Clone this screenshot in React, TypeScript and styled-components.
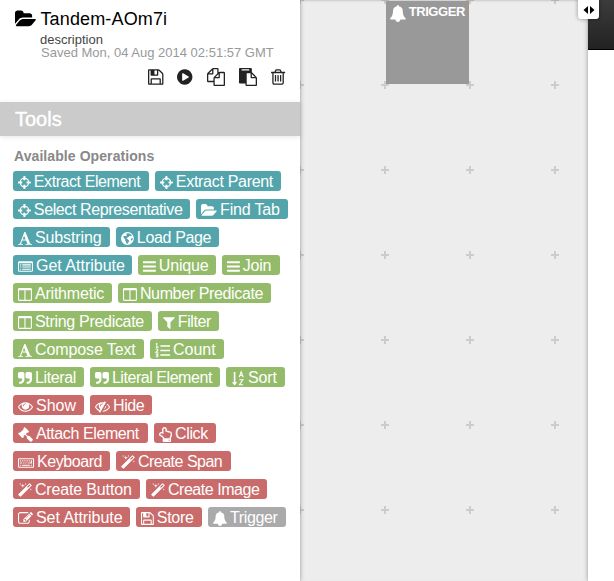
import React from 'react';
import styled, { createGlobalStyle } from 'styled-components';
import { FaRegHandPointUp } from 'react-icons/fa';

const Global = createGlobalStyle`
  * { box-sizing: border-box; }
  body { margin: 0; background: #fff; font-family: "Liberation Sans", Arial, sans-serif; overflow: hidden; }
`;

const paths = {
  folder: 'M1879 952q0 31-31 66l-336 396q-43 51-120.5 86.5t-143.5 35.5h-1088q-34 0-60.5-13t-26.5-43q0-31 31-66l336-396q43-51 120.5-86.5t143.5-35.5h1088q34 0 60.5 13t26.5 43zm-343-344v160h-832q-94 0-197 47.5t-164 119.5l-337 396-5 6q0-4-.5-12.5t-.5-12.5v-960q0-92 66-158t158-66h320q92 0 158 66t66 158v32h544q92 0 158 66t66 158z',
  save: 'M384 1536h768v-384h-768v384zm896 0h128v-896q0-14-10-38.5t-20-34.5l-281-281q-10-10-34-20t-39-10v416q0 40-28 68t-68 28h-576q-40 0-68-28t-28-68v-416h-128v1280h128v-416q0-40 28-68t68-28h832q40 0 68 28t28 68v416zm-384-928v-320q0-13-9.5-22.5t-22.5-9.5h-192q-13 0-22.5 9.5t-9.5 22.5v320q0 13 9.5 22.5t22.5 9.5h192q13 0 22.5-9.5t9.5-22.5zm640 32v928q0 40-28 68t-68 28h-1344q-40 0-68-28t-28-68v-1344q0-40 28-68t68-28h928q40 0 88 20t76 48l280 280q28 28 48 76t20 88z',
  play: 'M896 128q209 0 385.5 103t279.5 279.5 103 385.5-103 385.5-279.5 279.5-385.5 103-385.5-103-279.5-279.5-103-385.5 103-385.5 279.5-279.5 385.5-103zm384 823q32-18 32-55t-32-55l-544-320q-31-19-64-1-32 19-32 56v640q0 37 32 56 16 8 32 8 17 0 32-9z',
  files: 'M1696 384q40 0 68 28t28 68v1216q0 40-28 68t-68 28h-960q-40 0-68-28t-28-68v-288h-544q-40 0-68-28t-28-68v-672q0-40 20-88t48-76l408-408q28-28 76-48t88-20h416q40 0 68 28t28 68v328q68-40 128-40h416zm-544 213l-299 299h299v-299zm-640-384l-299 299h299v-299zm196 647l316-316v-416h-384v416q0 40-28 68t-68 28h-416v640h512v-256q0-40 20-88t48-76zm956 804v-1152h-384v416q0 40-28 68t-68 28h-416v640h896z',
  paste: 'M768 1664h896v-640h-416q-40 0-68-28t-28-68v-416h-384v1152zm256-1440v-64q0-13-9.5-22.5t-22.5-9.5h-704q-13 0-22.5 9.5t-9.5 22.5v64q0 13 9.5 22.5t22.5 9.5h704q13 0 22.5-9.5t9.5-22.5zm256 672h299l-299-299v299zm512 128v672q0 40-28 68t-68 28h-960q-40 0-68-28t-28-68v-160h-544q-40 0-68-28t-28-68v-1344q0-40 28-68t68-28h1088q40 0 68 28t28 68v328q21 13 36 28l408 408q28 28 48 76t20 88z',
  trash: 'M704 736v576q0 14-9 23t-23 9h-64q-14 0-23-9t-9-23v-576q0-14 9-23t23-9h64q14 0 23 9t9 23zm256 0v576q0 14-9 23t-23 9h-64q-14 0-23-9t-9-23v-576q0-14 9-23t23-9h64q14 0 23 9t9 23zm256 0v576q0 14-9 23t-23 9h-64q-14 0-23-9t-9-23v-576q0-14 9-23t23-9h64q14 0 23 9t9 23zm128 724v-948h-896v948q0 22 7 40.5t14.5 27 10.5 8.5h832q3 0 10.5-8.5t14.5-27 7-40.5zm-672-1076h448l-48-117q-7-9-17-11h-317q-10 2-17 11zm928 32v64q0 14-9 23t-23 9h-96v948q0 83-47 143.5t-113 60.5h-832q-66 0-113-58.5t-47-141.5v-952h-96q-14 0-23-9t-9-23v-64q0-14 9-23t23-9h309l70-167q15-37 54-63t79-26h320q40 0 79 26t54 63l70 167h309q14 0 23 9t9 23z',
  crosshairs: 'M1325 1024h-109q-26 0-45-19t-19-45v-128q0-26 19-45t45-19h109q-32-108-112.5-188.5t-188.5-112.5v109q0 26-19 45t-45 19h-128q-26 0-45-19t-19-45v-109q-108 32-188.5 112.5t-112.5 188.5h109q26 0 45 19t19 45v128q0 26-19 45t-45 19h-109q32 108 112.5 188.5t188.5 112.5v-109q0-26 19-45t45-19h128q26 0 45 19t19 45v109q108-32 188.5-112.5t112.5-188.5zm339-192v128q0 26-19 45t-45 19h-143q-37 161-154.5 278.5t-278.5 154.5v143q0 26-19 45t-45 19h-128q-26 0-45-19t-19-45v-143q-161-37-278.5-154.5t-154.5-278.5h-143q-26 0-45-19t-19-45v-128q0-26 19-45t45-19h143q37-161 154.5-278.5t278.5-154.5v-143q0-26 19-45t45-19h128q26 0 45 19t19 45v143q161 37 278.5 154.5t154.5 278.5h143q26 0 45 19t19 45z',
  serifA: 'M789 559l-170 450q33 0 136.5 2t160.5 2q19 0 57-2-87-253-184-452zm-725 1105l2-79q23-7 56-12.5t57-10.5 49.5-14.5 44.5-29 31-50.5l237-616 280-724h128q8 14 11 21l205 480q33 78 106 257.5t114 274.5q15 34 58 144.5t72 168.5q20 45 35 57 19 15 88 29.5t84 20.5q6 38 6 57 0 4-.5 13t-.5 13q-63 0-190-8t-191-8q-76 0-215 7t-178 8q0-43 4-78l131-28q1 0 12.5-2.5t15.5-3.5 14.5-4.5 15-6.5 11-8 9-11 2.5-14q0-16-31-96.5t-72-177.5-42-100l-450-2q-26 58-76.5 195.5t-50.5 162.5q0 22 14 37.5t43.5 24.5 48.5 13.5 57 8.5 41 4q1 19 1 58 0 9-2 27-58 0-174.5-10t-174.5-10q-8 0-26.5 4t-21.5 4q-80 14-188 14z',
  globe: 'M896 128a768 768 0 1 0 0 1536a768 768 0 1 0 0-1536zM1010 260L1240 350L1420 520L1330 640L1180 560L1060 700L900 780L780 900L900 960L1010 1090L1130 1180L1000 1370L920 1530L760 1500L740 1280L600 1120L640 960L480 860L390 700L500 560L700 640L830 500L760 390L880 280zM1360 880L1530 830L1500 1060L1380 1180L1290 1010z',
  listAlt: 'M160 256h1472q160 0 160 160v960q0 160-160 160h-1472q-160 0-160-160v-960q0-160 160-160zM128 512v864q0 32 32 32h1472q32 0 32-32v-864zM256 640h128v128h-128zM512 640h1024v128h-1024zM256 896h128v128h-128zM512 896h1024v128h-1024zM256 1152h128v128h-128zM512 1152h1024v128h-1024z',
  bars: 'M1664 1344v128q0 26-19 45t-45 19h-1408q-26 0-45-19t-19-45v-128q0-26 19-45t45-19h1408q26 0 45 19t19 45zm0-512v128q0 26-19 45t-45 19h-1408q-26 0-45-19t-19-45v-128q0-26 19-45t45-19h1408q26 0 45 19t19 45zm0-512v128q0 26-19 45t-45 19h-1408q-26 0-45-19t-19-45v-128q0-26 19-45t45-19h1408q26 0 45 19t19 45z',
  columns: 'M160 128h1344q160 0 160 160v1216q0 160-160 160h-1344q-160 0-160-160v-1216q0-160 160-160zM128 384v1120q0 32 32 32h608v-1152zM896 384v1152h608q32 0 32-32v-1120z',
  filter: 'M1595 295q17 41-14 70l-493 493v742q0 42-39 59-13 5-25 5-27 0-45-19l-256-256q-19-19-19-45v-486l-493-493q-31-29-14-70 17-39 59-39h1280q42 0 59 39z',
  quote: 'M832 320v704q0 104-40.5 198.5t-109.5 163.5-163.5 109.5-198.5 40.5h-64q-26 0-45-19t-19-45v-128q0-26 19-45t45-19h64q106 0 181-75t75-181v-32q0-40-28-68t-68-28h-224q-80 0-136-56t-56-136v-384q0-80 56-136t136-56h384q80 0 136 56t56 136zm896 0v704q0 104-40.5 198.5t-109.5 163.5-163.5 109.5-198.5 40.5h-64q-26 0-45-19t-19-45v-128q0-26 19-45t45-19h64q106 0 181-75t75-181v-32q0-40-28-68t-68-28h-224q-80 0-136-56t-56-136v-384q0-80 56-136t136-56h384q80 0 136 56t56 136z',
  eye: 'M1664 960q-152-236-381-353 61 104 61 225 0 185-131.5 316.5t-316.5 131.5-316.5-131.5-131.5-316.5q0-121 61-225-229 117-381 353 133 205 333.5 326.5t434.5 121.5 434.5-121.5 333.5-326.5zm-720-384q0-20-14-34t-34-14q-125 0-214.5 89.5t-89.5 214.5q0 20 14 34t34 14 34-14 14-34q0-86 61-147t147-61q20 0 34-14t14-34zm848 384q0 34-20 69-140 230-376.5 368.5t-499.5 138.5-499.5-139-376.5-368q-20-35-20-69t20-69q140-229 376.5-368t499.5-139 499.5 139 376.5 368q20 35 20 69z',
  eyeSlash: 'M555 1335l78-141q-87-63-136-159t-49-203q0-121 61-225-229 117-381 353 167 258 427 375zm389-759q0-20-14-34t-34-14q-125 0-214.5 89.5t-89.5 214.5q0 20 14 34t34 14 34-14 14-34q0-86 61-147t147-61q20 0 34-14t14-34zm363-191q0 7-1 9-105 188-315 566t-316 567l-49 89q-10 16-28 16-12 0-134-70-16-10-16-28 0-12 44-87-143-65-263.5-173t-208.5-245q-20-31-20-69t20-69q153-235 380-371t496-136q89 0 180 17l54-97q10-16 28-16 5 0 18 6t31 15.5 33 18.5 31.5 18.5 19.5 11.5q16 10 16 27zm37 447q0 139-79 253.5t-209 164.5l280-502q8 45 8 84zm448 128q0 35-20 69-39 64-109 145-150 172-347.5 267t-419.5 95l74-132q212-18 392.5-137t301.5-307q-115-179-282-294l63-112q95 64 182.5 153t144.5 184q20 34 20 69z',
  gavel: 'M1771 1536q0 53-37 90l-107 108q-39 37-91 37-53 0-90-37l-363-364q-38-36-38-90 0-53 43-96l-256-256-126 126q-14 14-34 14t-34-14q2 2 12.5 12t12.5 13 10 11.5 10 13.5 6 13.5 5.5 16.5 1.5 18q0 38-28 68-3 3-16.5 18t-19 20.5-18.5 16.5-22 15.5-22 9-26 4.5q-40 0-68-28l-408-408q-28-28-28-68 0-13 4.5-26t9-22 15.5-22 16.5-18.5 20.5-19 18-16.5q30-28 68-28 10 0 18 1.5t16.5 5.5 13.5 6 13.5 10 11.5 10 13 12.5 12 12.5q-14-14-14-34t14-34l348-348q14-14 34-14t34 14q-2-2-12.5-12t-12.5-13-10-11.5-10-13.5-6-13.5-5.5-16.5-1.5-18q0-38 28-68 3-3 16.5-18t19-20.5 18.5-16.5 22-15.5 22-9 26-4.5q40 0 68 28l408 408q28 28 28 68 0 13-4.5 26t-9 22-15.5 22-16.5 18.5-20.5 19-18 16.5q-30 28-68 28-10 0-18-1.5t-16.5-5.5-13.5-6-13.5-10-11.5-10-13-12.5-12-12.5q14 14 14 34t-14 34l-126 126 256 256q43-43 96-43 52 0 91 37l363 363q37 39 37 91z',
  keyboard: 'M128 384h1664q128 0 128 128v896q0 128-128 128h-1664q-128 0-128-128v-896q0-128 128-128zM128 512v896h1664v-896zM256 640h128v128h-128zM512 640h128v128h-128zM768 640h128v128h-128zM1024 640h128v128h-128zM1280 640h128v128h-128zM1536 640h128v384h-320v-128h192zM256 896h256v128h-256zM640 896h128v128h-128zM896 896h128v128h-128zM1152 896h128v128h-128zM256 1152h128v128h-128zM512 1152h896v128h-896zM1536 1152h128v128h-128z',
  magic: 'M1254 581l293-293-107-107-293 293zm447-293q0 27-18 45l-1286 1286q-18 18-45 18t-45-18l-198-198q-18-18-18-45t18-45l1286-1286q18-18 45-18t45 18l198 198q18 18 18 45zm-1351-190l98 30-98 30-30 98-30-98-98-30 98-30 30-98zm350 162l196 60-196 60-60 196-60-196-196-60 196-60 60-196zm930 478l98 30-98 30-30 98-30-98-98-30 98-30 30-98zm-640-640l98 30-98 30-30 98-30-98-98-30 98-30 30-98z',
  edit: 'M888 1184l116-116-152-152-116 116v56h96v96h56zm440-720q-16-16-33 1l-350 350q-17 17-1 33t33-1l350-350q17-17 1-33zm80 594v190q0 119-84.5 203.5t-203.5 84.5h-832q-119 0-203.5-84.5t-84.5-203.5v-832q0-119 84.5-203.5t203.5-84.5h832q63 0 117 25 15 7 18 23 3 17-9 29l-49 49q-14 14-32 8-23-6-45-6h-832q-66 0-113 47t-47 113v832q0 66 47 113t113 47h832q66 0 113-47t47-113v-126q0-13 9-22l64-64q15-15 35-7t20 29zm-96-738l288 288-672 672h-288v-288zm444 132l-92 92-288-288 92-92q28-28 68-28t68 28l152 152q28 28 28 68t-28 68z',
  bell: 'M1728 1408q0 52-38 90t-90 38h-448q0 106-75 181t-181 75-181-75-75-181h-448q-52 0-90-38t-38-90q50-42 91-88t85-119.5 74.5-158.5 50-206 19.5-260q0-152 117-282.5t307-158.5q-8-19-8-39 0-40 28-68t68-28 68 28 28 68q0 20-8 39 190 28 307 158.5t117 282.5q0 139 19.5 260t50 206 74.5 158.5 85 119.5 91 88z',
};

type IconName = keyof typeof paths | 'hand' | 'listOl' | 'sort';

/* Left bound and advance width of each icon on the 1792-unit em. */
const boxes: Record<IconName, [number, number]> = {
  folder: [0, 1920], save: [0, 1536], play: [128, 1536], files: [0, 1792], paste: [0, 1792], trash: [192, 1408],
  crosshairs: [128, 1536], serifA: [64, 1664], globe: [128, 1536], listAlt: [0, 1792], bars: [128, 1536],
  columns: [0, 1664], filter: [192, 1408], quote: [64, 1664], eye: [0, 1792], eyeSlash: [0, 1792],
  gavel: [0, 1792], keyboard: [0, 1920], magic: [64, 1664], edit: [0, 1792], bell: [64, 1664],
  hand: [0, 1536], listOl: [0, 1792], sort: [0, 1664],
};

const Svg = styled.svg`
  display: block;
  flex: none;
  overflow: visible;
  fill: currentColor;
`;

const HandIcon = styled(FaRegHandPointUp)`
  flex: none;
  width: 13px;
  height: 15px;
`;

const Icon = ({ name, size }: { name: IconName; size: number }) => {
  const [left, adv] = boxes[name];
  if (name === 'hand') return <HandIcon />;
  return (
    <Svg width={(adv / 1792) * size} height={size} viewBox={`${left} 0 ${adv} 1792`}>
      {name === 'listOl' ? (
        <>
          <path d="M640 256h1152v192h-1152zM640 800h1152v192h-1152zM640 1344h1152v192h-1152z" />
          <path
            d="M100 130L220 60V510M90 510h340M80 760q150-100 260 0q60 100-220 340h270M90 1300h260l-140 170q180 10 150 140q-90 120-280 20"
            fill="none" stroke="currentColor" strokeWidth="120"
          />
        </>
      ) : name === 'sort' ? (
        <>
          <path d="M330 128h200v1216h224l-324 384-324-384h224z" />
          <path
            d="M980 740L1220 90L1460 740M1060 540h320M1000 1050h420L1010 1640h440"
            fill="none" stroke="currentColor" strokeWidth="130"
          />
        </>
      ) : (
        <path
          fillRule={['listAlt', 'columns', 'keyboard', 'globe'].includes(name) ? 'evenodd' : 'nonzero'}
          d={paths[name as keyof typeof paths]}
        />
      )}
    </Svg>
  );
};

const Page = styled.div`
  display: flex;
  width: 614px;
  height: 581px;
  background: #fff;
  overflow: hidden;
`;

const Sidebar = styled.aside`
  position: relative;
  z-index: 1;
  width: 300px;
  flex: none;
  background: #fff;
  box-shadow: 0 0 5px rgba(0, 0, 0, 0.3);
`;

const Header = styled.header`
  height: 102px;
  padding: 8px 15px 0 15px;
`;

const TitleRow = styled.div`
  display: flex;
  align-items: center;
  gap: 4px;
  height: 22px;
  margin-bottom: 3px;
  color: #000;
`;

const Title = styled.h1`
  margin: 0;
  font: 400 18px/22px "Liberation Sans", Arial, sans-serif;
  letter-spacing: 0.15px;
`;

const Meta = styled.div<{ $tone: string; $indent: number }>`
  padding-left: ${(p) => p.$indent}px;
  font-size: 13px;
  line-height: 13px;
  white-space: nowrap;
  color: ${(p) => p.$tone};
`;

const Actions = styled.div`
  display: flex;
  justify-content: flex-end;
  align-items: center;
  gap: 14px;
  margin-top: 8px;
  height: 20px;
  color: #222;
`;

const SectionBar = styled.h2`
  margin: 0;
  height: 34px;
  padding-left: 15px;
  background: #cbcbcb;
  box-shadow: 0 1px 5px rgba(0, 0, 0, 0.1);
  color: #fff;
  font: 400 20px/34px "Liberation Sans", Arial, sans-serif;
  -webkit-text-stroke: 0.4px #fff;
`;

const Operations = styled.section`
  padding: 12px 0 0 13px;
`;

const Heading = styled.h3`
  margin: 0 0 7px 1px;
  font: 700 14px/16px "Liberation Sans", Arial, sans-serif;
  letter-spacing: 0.08px;
  color: #888;
`;

const Row = styled.div`
  display: flex;
  gap: 6px;
  margin-bottom: 8px;
`;

const tones = { teal: '#53a5ab', green: '#94bb69', red: '#c96b6b', gray: '#aaaaaa' };

const Pill = styled.button<{ $tone: keyof typeof tones; $width: number; $tracking: number }>`
  display: flex;
  align-items: center;
  flex: none;
  gap: 3px;
  width: ${(p) => p.$width}px;
  height: 20px;
  padding: 2px 0 0 5px;
  border: 0;
  border-radius: 3px;
  background: ${(p) => tones[p.$tone]};
  color: #fff;
  font: 400 16px/18px "Liberation Sans", Arial, sans-serif;
  letter-spacing: ${(p) => p.$tracking}px;
  white-space: nowrap;
`;

const plusTile =
  "url(\"data:image/svg+xml,%3Csvg xmlns='http://www.w3.org/2000/svg' width='85' height='85'%3E%3Cpath d='M9 6h2v8h-2zM6 9h8v2h-8z' fill='%23ccc'/%3E%3C/svg%3E\")";

const Canvas = styled.main`
  width: 288px;
  flex: none;
  padding: 1px 0 0 86px;
  background: #ededed ${plusTile} -10px -10px;
  box-shadow: inset 0 1px 2px rgba(0, 0, 0, 0.15);
`;

const Node = styled.div`
  display: flex;
  gap: 3px;
  width: 83px;
  height: 83px;
  padding: 4px 0 0 4px;
  background: #999;
  color: #fff;
`;

const NodeLabel = styled.span`
  font: 700 13px/15px "Liberation Sans", Arial, sans-serif;
  letter-spacing: -0.45px;
  height: 15px;
  margin-top: -1px;
`;

const Preview = styled.aside`
  position: relative;
  flex: 1;
  background: #fff;
  box-shadow: 0 0 5px rgba(0, 0, 0, 0.3);
`;

const PreviewBar = styled.div`
  height: 50px;
  border-bottom: 1px solid #000;
  background: linear-gradient(#3c3c3c, #222);
`;

const Toggle = styled.button`
  position: absolute;
  left: -10px;
  top: -3px;
  display: flex;
  align-items: center;
  justify-content: center;
  width: 21px;
  height: 22px;
  padding: 3px 0 0;
  border: 0;
  border-radius: 3px;
  background: #fff;
  color: #000;
  box-shadow: 0 0 4px rgba(0, 0, 0, 0.4);
`;

type Op = [label: string, icon: IconName, tone: keyof typeof tones, width: number, tracking: number];
const rows: Op[][] = [
  [['Extract Element', 'crosshairs', 'teal', 136, -0.43], ['Extract Parent', 'crosshairs', 'teal', 126, -0.3]],
  [['Select Representative', 'crosshairs', 'teal', 177, -0.38], ['Find Tab', 'folder', 'teal', 92, -0.17]],
  [['Substring', 'serifA', 'teal', 97, -0.1], ['Load Page', 'globe', 'teal', 103, -0.35]],
  [['Get Attribute', 'listAlt', 'teal', 119, 0], ['Unique', 'bars', 'green', 78, -0.2], ['Join', 'bars', 'green', 58, -0.3]],
  [['Arithmetic', 'columns', 'green', 99, -0.2], ['Number Predicate', 'columns', 'green', 153, -0.36]],
  [['String Predicate', 'columns', 'green', 139, -0.3], ['Filter', 'filter', 'green', 61, -0.4]],
  [['Compose Text', 'serifA', 'green', 131, -0.1], ['Count', 'listOl', 'green', 74, 0]],
  [['Literal', 'quote', 'green', 71, -0.35], ['Literal Element', 'quote', 'green', 130, -0.45], ['Sort', 'sort', 'green', 59, -0.1]],
  [['Show', 'eye', 'red', 71, 0], ['Hide', 'eyeSlash', 'red', 62, -0.4]],
  [['Attach Element', 'gavel', 'red', 135, -0.4], ['Click', 'hand', 'red', 62, -0.35]],
  [['Keyboard', 'keyboard', 'red', 97, -0.45], ['Create Span', 'magic', 'red', 115, -0.5]],
  [['Create Button', 'magic', 'red', 127, -0.15], ['Create Image', 'magic', 'red', 121, -0.45]],
  [['Set Attribute', 'edit', 'red', 117, -0.05], ['Store', 'save', 'red', 66, -0.3], ['Trigger', 'bell', 'gray', 78, -0.35]],
];

export default function App() {
  return (
    <Page>
      <Global />
      <Sidebar>
        <Header>
          <TitleRow>
            <Icon name="folder" size={20} />
            <Title>Tandem-AOm7i</Title>
          </TitleRow>
          <Meta $tone="#444" $indent={25}>description</Meta>
          <Meta $tone="#999" $indent={26}>Saved Mon, 04 Aug 2014 02:51:57 GMT</Meta>
          <Actions>
            <Icon name="save" size={18} />
            <Icon name="play" size={18} />
            <Icon name="files" size={18} />
            <Icon name="paste" size={18} />
            <Icon name="trash" size={18} />
          </Actions>
        </Header>
        <SectionBar>Tools</SectionBar>
        <Operations>
          <Heading>Available Operations</Heading>
          {rows.map((row) => (
            <Row key={row[0][0]}>
              {row.map(([label, icon, tone, width, tracking]) => (
                <Pill key={label} $tone={tone} $width={width} $tracking={tracking}>
                  <Icon name={icon} size={15} />
                  {label}
                </Pill>
              ))}
            </Row>
          ))}
        </Operations>
      </Sidebar>
      <Canvas>
        <Node>
          <Icon name="bell" size={17} />
          <NodeLabel>TRIGGER</NodeLabel>
        </Node>
      </Canvas>
      <Preview>
        <PreviewBar />
        <Toggle aria-label="Resize panel">
          <Svg width="12" height="8" viewBox="0 0 12 8">
            <path d="M5 0v8L0.5 4zM7 0v8L11.5 4z" />
          </Svg>
        </Toggle>
      </Preview>
    </Page>
  );
}
